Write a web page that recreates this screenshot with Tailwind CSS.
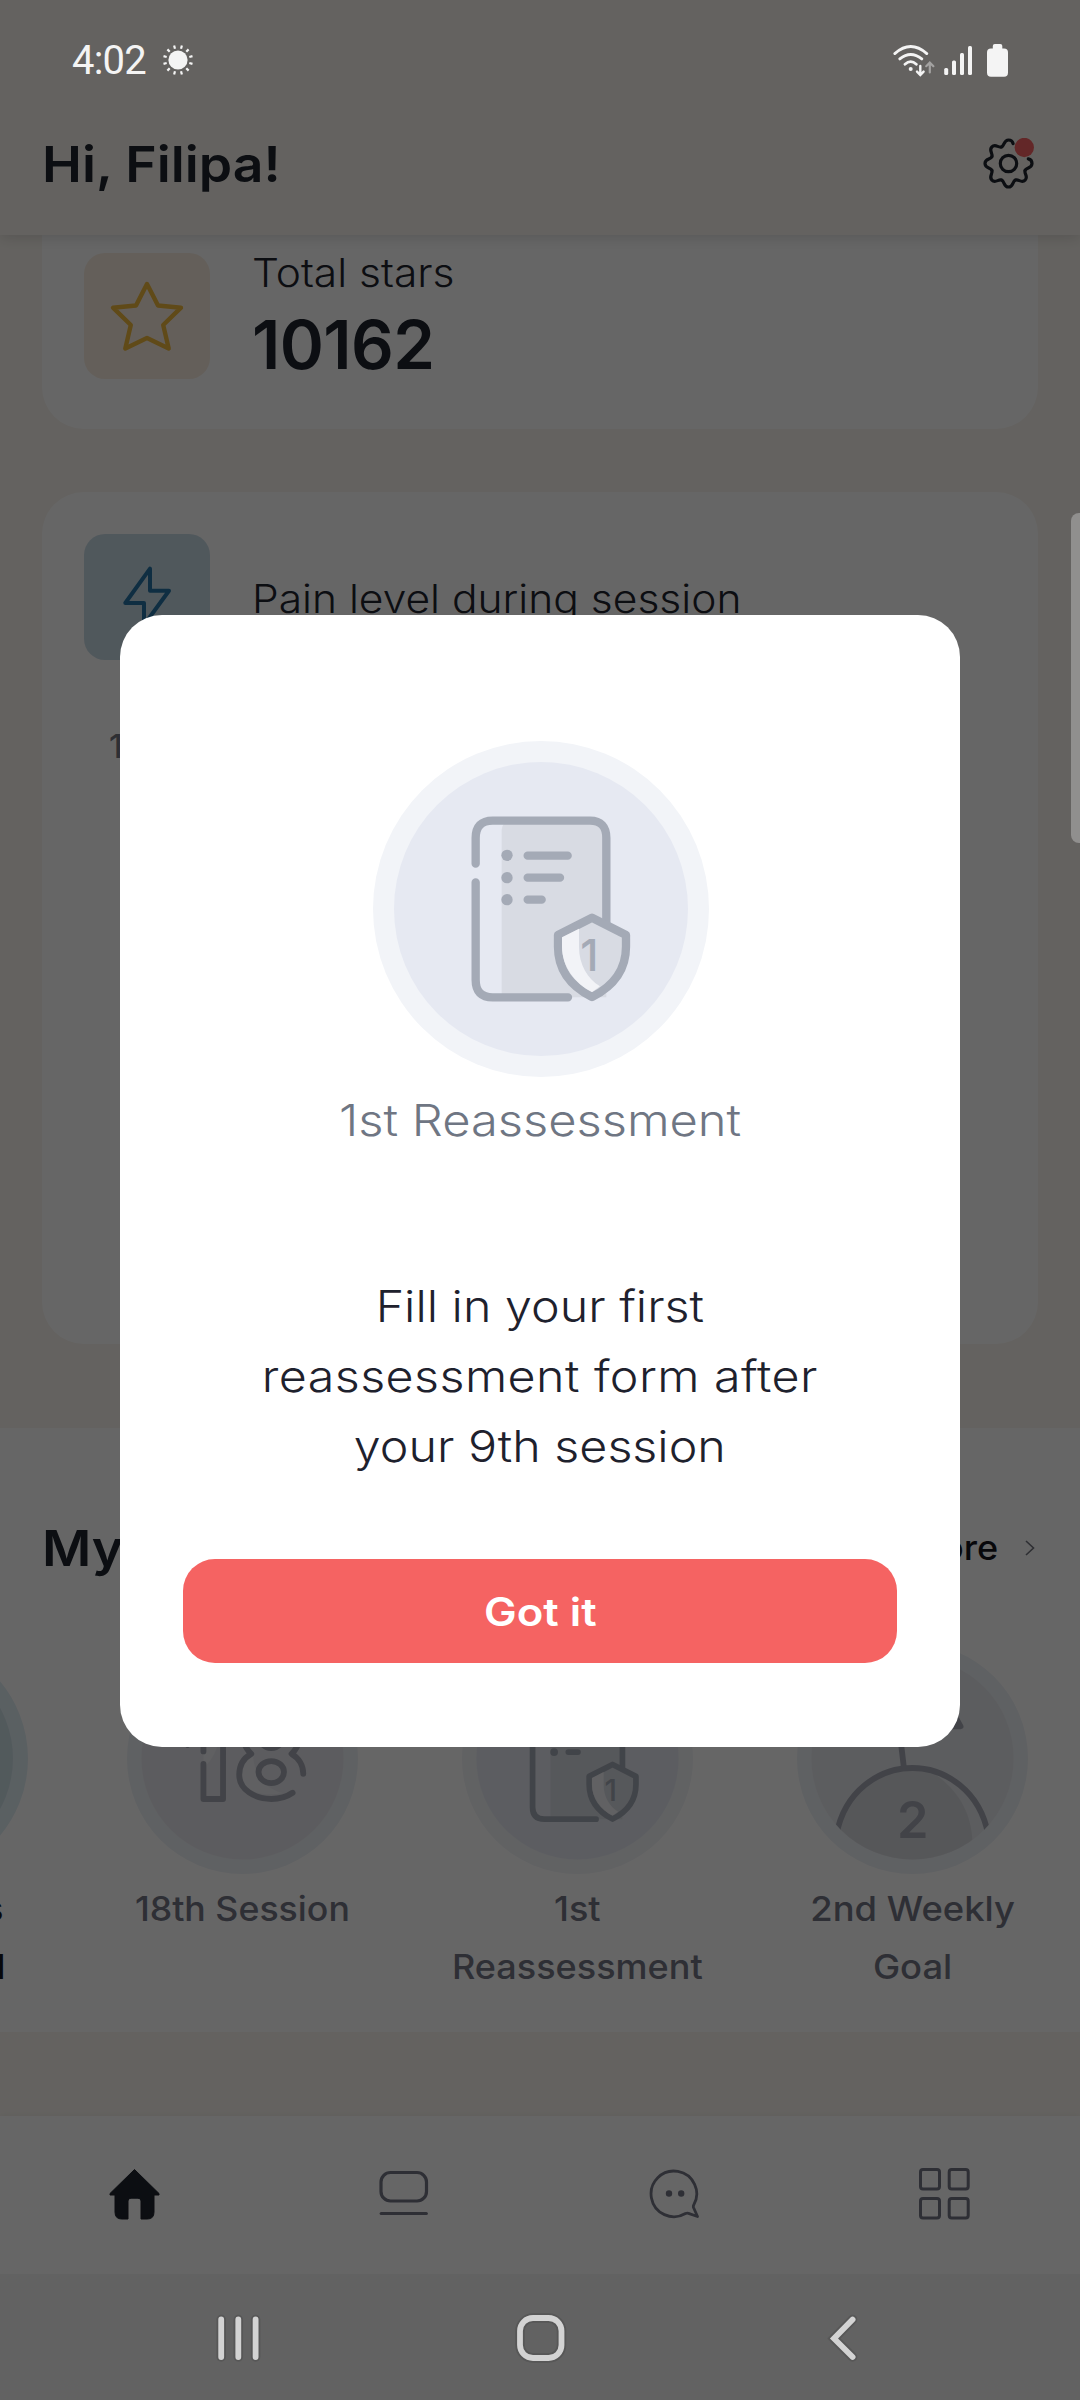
<!DOCTYPE html>
<html lang="en">
<head>
<meta charset="utf-8">
<title>Home</title>
<script src="https://cdn.jsdelivr.net/npm/@tailwindcss/browser@4"></script>
</head>
<body class="bg-[#faf6f0] font-[Inter,'Open_Sans',sans-serif]">
<svg class="hidden">
  <symbol id="reassessment" viewBox="69 63 1008 1008">
    <circle cx="573" cy="567" r="504" fill="#f2f4f8"/>
    <circle cx="573" cy="567" r="441" fill="#e6e9f2"/>
    <path d="M455 330Q457 302 485 302H722Q769 305 769 354V832H455Z" fill="#d8dbe3"/>
    <g fill="none" stroke="#a4aab6" stroke-width="25" stroke-linecap="round" stroke-linejoin="round">
      <path d="M377 431V354Q377 302 428 302H720Q769 302 769 354V610M377 487V780Q377 832 428 832H654"/>
      <path d="M533 407H653M533 473H630M533 539H575"/>
      <path d="M726 593L828 645V680C828 755 783 802 726 831C669 802 624 755 624 680V645Z" fill="#d8dbe3"/>
    </g>
    <path d="M636 652L687 626V680C687 735 713 775 750 799L726 816C676 790 636 740 636 680Z" fill="#f2f3f7"/>
    <g fill="#a4aab6"><circle cx="471" cy="406" r="17"/><circle cx="471" cy="473" r="17"/><circle cx="471" cy="539" r="17"/>
    <text x="718" y="753" font-size="132" font-weight="500" text-anchor="middle" font-family="Inter">1</text></g>
  </symbol>
</svg>

<div class="relative flex h-[2400px] w-[1080px] flex-col overflow-hidden">
  <header class="z-10 flex h-[235px] shrink-0 items-center justify-between bg-[#faf6f0] pt-[92px] pr-[46px] pl-[42px] shadow-[0_2px_14px_rgba(0,0,0,0.15)]">
    <h1 class="origin-left scale-x-[1.07] text-[50px] leading-[60px] font-semibold text-[#1e232d]">Hi, Filipa!</h1>
    <svg class="h-[52px] w-[52px]" viewBox="-26.500 -25.500 52 52" fill="none" stroke="#1e232d" stroke-width="3.2" stroke-linecap="round">
      <circle r="8.2"/>
      <path id="tooth" d="M-6.9-16.6C-3.7-17.9-5-23.5 0-23.5S3.7-17.9 6.9-16.6" transform="rotate(135)"/>
      <use href="#tooth" transform="rotate(45)"/>
      <use href="#tooth" transform="rotate(90)"/>
      <use href="#tooth" transform="rotate(135)"/>
      <use href="#tooth" transform="rotate(180)"/>
      <path d="M-6.9-16.6C-3.7-17.9-5-23.5 0-23.5C3-23.5 4.2-21.6 4.6-19.8"/>
      <path d="M19.8-4.6C21.6-4.2 23.5-3 23.5 0C23.5 5 17.9 3.7 16.6 6.9"/>
      <circle cx="15.8" cy="-16" r="9.7" fill="#f76364" stroke="none"/>
    </svg>
  </header>

  <main class="flex h-[1881px] shrink-0 flex-col overflow-hidden">
    <section class="mx-[42px] flex h-[194px] shrink-0 gap-[42px] rounded-b-[42px] bg-white px-[42px] pt-[18px]">
      <div class="h-[126px] w-[126px] rounded-[21px] bg-[#faeee1]">
        <svg viewBox="0 0 126 126" fill="none" stroke="#f0b83c" stroke-width="4.4" stroke-linejoin="round"><path d="M63 31L74 52.500L97 54.700L79.200 72L84.700 95.500L63 85L41.300 95.500L46.800 72L29 54.700L52 52.500Z"/></svg>
      </div>
      <div class="-mt-1 text-[#1e232d]">
        <p class="w-fit origin-left scale-x-[1.09] text-[39px] leading-[48px] font-[330]">Total stars</p>
        <p class="mt-2 text-[67px] leading-[80px] font-semibold tracking-[-0.6px]">10162</p>
      </div>
    </section>

    <section class="mx-[42px] mt-[63px] h-[852px] shrink-0 rounded-[42px] bg-white p-[42px]">
      <div class="flex items-center gap-[42px]">
        <div class="h-[126px] w-[126px] rounded-[21px] bg-[#c9dce7]">
          <svg viewBox="0 0 126 126" fill="none" stroke="#2674a5" stroke-width="4" stroke-linejoin="round"><path d="M66 34.700V56.700H85L60 91V69H41.300Z"/></svg>
        </div>
        <p class="origin-left scale-x-[1.09] pt-[3px] text-[39px] leading-[48px] font-[330] text-[#1e232d]">Pain level during session</p>
      </div>
      <p class="mt-[66px] ml-[25px] text-[33px] leading-[40px] font-medium text-[#73757f]">10</p>
    </section>

    <section class="mt-[84px] h-[604px] shrink-0 bg-white pt-[90px]">
      <div class="flex items-center justify-between pr-[45px] pl-[42px] leading-[60px]">
        <h2 class="origin-left scale-x-[1.07] text-[50px] font-semibold text-[#1e232d]">My achievements</h2>
        <div class="flex items-center gap-[27px] text-[34px] font-[450] text-[#14161c]"><span class="origin-right scale-x-[1.06]">See more</span>
          <svg class="h-4 w-[10px]" viewBox="0 0 10 16" fill="none" stroke="#73757f" stroke-width="1.6"><path d="M1 1L8.500 8L1 15"/></svg>
        </div>
      </div>
      <div class="mt-[60px] -ml-[260px] flex text-center text-[34px] leading-[58px] font-[450] text-[#737585]">
        <div class="flex w-[335px] shrink-0 flex-col items-center text-[#14161c]">
          <div class="mb-px h-[241px] w-[241px] rounded-full border-[15px] border-[#e2eff6] bg-[#cee0e7]"></div>
          <p>10 Sessions<br><span class="tracking-[-0.8px]">Weekly Goal</span></p>
        </div>
        <div class="flex w-[335px] shrink-0 flex-col items-center">
          <div class="mb-px flex h-[241px] items-center">
            <svg class="h-[231px] w-[231px]" viewBox="369 474 671 671" fill="none" stroke="#a5a8b4" stroke-width="17" stroke-linecap="round" stroke-linejoin="round">
              <circle cx="704.500" cy="809.500" r="335.500" fill="#eef2f7" stroke="none"/>
              <circle cx="704.500" cy="809.500" r="293.500" fill="#e7e7ed" stroke="none"/>
              <path d="M599 830Q625 800 632 770V680H591V830ZM735 800C737 850 765 895 820 910C765 922 700 905 700 857C700 830 712 812 735 800Z" fill="#eff0f5" stroke="none"/>
              <path d="M591 789V715L545 770L520 730L591 650H648V927H591V825"/>
              <path d="M850 909C833 921 812 927 788 927C740 927 695 900 695 857C695 830 708 808 730 796C680 750 710 660 788 660S896 750 847 796C868 808 881 830 881 854"/>
              <ellipse cx="788" cy="849" rx="37" ry="32"/><ellipse cx="788" cy="745" rx="35" ry="34"/>
            </svg>
          </div>
          <p class="scale-x-[1.05]">18th Session</p>
        </div>
        <div class="flex w-[335px] shrink-0 flex-col items-center">
          <div class="mb-px flex h-[241px] items-center"><svg class="h-[231px] w-[231px]"><use href="#reassessment"/></svg></div>
          <p class="scale-x-[1.06]">1st<br>Reassessment</p>
        </div>
        <div class="flex w-[335px] shrink-0 flex-col items-center">
          <div class="mb-px flex h-[241px] items-center">
            <svg class="h-[231px] w-[231px]" viewBox="747 474 671 671" fill="none" stroke="#a5a8b4" stroke-width="17" stroke-linejoin="round">
              <clipPath id="disc"><circle cx="1082.500" cy="809.500" r="293.500"/></clipPath>
              <circle cx="1082.500" cy="809.500" r="335.500" fill="#eef2f7" stroke="none"/>
              <circle cx="1082.500" cy="809.500" r="293.500" fill="#e6e8ed" stroke="none"/>
              <g clip-path="url(#disc)">
                <path d="M862 1030C890 905 985 837 1082 837C1112 837 1140 842 1157 862C1215 905 1257 970 1257 1060V1110H862Z" fill="#d8dadf" stroke="none"/>
                <path d="M862 1030C885 905 985 837 1082 837S1279 905 1302 1030"/>
              </g>
              <path d="M1057 832L1032 620L1160 640L1210 675" stroke-linecap="round"/>
              <path d="M1222 716L1195 716L1212 698Z" fill="#a5a8b4"/>
              <text x="1083" y="1040" font-size="147" font-weight="600" text-anchor="middle" font-family="Inter" fill="#a5a8b4" stroke="none">2</text>
            </svg>
          </div>
          <p class="scale-x-[1.07]">2nd Weekly<br>Goal</p>
        </div>
      </div>
    </section>
  </main>

  <nav class="grid h-[158px] shrink-0 grid-cols-4 place-items-center bg-white pb-[2px] shadow-[0_-1px_6px_rgba(0,0,0,0.04)]">
    <svg class="h-[52px] w-[52px]" viewBox="-25.500 -26 52 52" fill="#1e232d" stroke="#1e232d" stroke-linejoin="round"><path d="M0-24.500L24.500-.5V1H19.500V18Q19.500 25 13 25H6.500V7Q6.500 4.200 3.500 4.200H-3.500Q-6.500 4.200-6.500 7V25H-13Q-19.500 25-19.500 18V1H-24.500V-.5Z"/></svg>
    <svg class="h-[52px] w-[52px]" viewBox="-26 -26 52 52" fill="none" stroke="#737585" stroke-width="3.200" stroke-linecap="round"><rect x="-24" y="-21.500" width="45.500" height="28.500" rx="9.500"/><path d="M-23.800 19.500H21.300"/></svg>
    <svg class="h-[52px] w-[52px]" viewBox="-26 -26 52 52" fill="none" stroke="#737585" stroke-width="2.800" stroke-linejoin="round"><path d="M18.500 11.500A22.800 22.800 0 1 0 10.500 19.500Q12 18.800 13.500 19.300L22.500 22.500L18.500 13.500Q18.200 12.500 18.500 11.500Z" fill="#fff"/><circle cx="-6" cy="-.5" r="3.200" fill="#737585" stroke="none"/><circle cx="6.200" cy="-.5" r="3.200" fill="#737585" stroke="none"/></svg>
    <svg class="h-[52px] w-[52px]" viewBox="-26 -26 52 52" fill="none" stroke="#737585" stroke-width="3"><rect x="-24.500" y="-24.500" width="19" height="19.500" rx="2.500"/><rect x="4.200" y="-24.500" width="19" height="19.500" rx="2.500"/><rect x="-24.500" y="4.500" width="19" height="19.500" rx="2.500"/><rect x="4.200" y="4.500" width="19" height="19.500" rx="2.500"/></svg>
  </nav>
  <div class="h-[126px] shrink-0 bg-[#f5f5f5]"></div>

  <!-- Dialog layer -->
  <div class="absolute inset-0 z-20 flex justify-center bg-black/60 pt-[615px]">
    <div class="flex h-[1132px] w-[840px] flex-col items-center rounded-[42px] bg-white pt-[126px]">
      <svg class="ml-[2px] h-[336px] w-[336px]"><use href="#reassessment"/></svg>
      <h3 class="mt-[13px] scale-x-[1.11] text-[44px] leading-[60px] font-[350] text-[#6f7683]">1st Reassessment</h3>
      <p class="mt-[121px] scale-x-[1.1] text-center text-[44px] leading-[70px] font-[350] text-[#1e212d]">Fill in your first<br><span class="tracking-[0.4px]">reassessment form after</span><br>your 9th session</p>
      <button class="mt-[78px] h-[104px] w-[714px] rounded-[32px] bg-[#f56362] pt-[2px] text-[39px] font-semibold text-white"><span class="inline-block scale-x-[1.12]">Got it</span></button>
    </div>
  </div>

  <!-- System bars -->
  <div class="absolute inset-x-0 top-0 z-30 flex h-[120px] items-center pr-[71px] pl-[72px]">
    <span class="pt-px text-[40px] tracking-[-0.8px] text-[#f4f4f4] font-[Roboto,sans-serif]">4:02</span>
    <svg class="ml-4 h-8 w-8" viewBox="-16 -16 32 32" fill="#f4f4f4">
      <circle r="9.600"/>
      <g stroke="#f4f4f4" stroke-width="2.200">
        <path id="rays" d="M0-11.700V-15M0 11.700V15M11.700 0H15M-11.700 0H-15" transform="rotate(15)"/>
        <use href="#rays" transform="rotate(30)"/><use href="#rays" transform="rotate(60)"/>
      </g>
    </svg>
    <svg class="ml-auto h-9 w-[44px]" viewBox="892 42 44 36" fill="none" stroke="#f4f4f4" stroke-width="2.800" stroke-linecap="round">
      <path d="M894.800 53.600Q910.700 39.500 926.800 53.600M899.800 58.900Q910.700 50 921.800 58.900M905 64.200Q910.700 59 916.300 64.200"/>
      <circle cx="910.700" cy="69" r="2" fill="#f4f4f4" stroke="none"/>
      <path d="M920.300 66V74.500M917 71.600L920.300 75L923.600 71.600" stroke-width="2.400"/>
      <path d="M929.800 72.500V63.500M926.200 66.200L929.800 62.600L933.400 66.200" stroke="#a3a2a1" stroke-width="2.200"/>
    </svg>
    <svg class="ml-[7px] h-9 w-[30px]" viewBox="943 42 30 36" fill="#f4f4f4"><rect x="944.200" y="68" width="4" height="7" rx="1.500"/><rect x="952" y="60.500" width="4" height="14.500" rx="1.500"/><rect x="960" y="53" width="4" height="22" rx="1.500"/><rect x="968" y="46" width="4" height="29" rx="1.500"/></svg>
    <svg class="ml-[13px] h-9 w-[23px]" viewBox="986 42 23 36" fill="#f4f4f4"><rect x="987" y="48.500" width="21" height="28.300" rx="4"/><rect x="992.800" y="44" width="9.500" height="10" rx="2"/></svg>
  </div>
  <div class="absolute top-[513px] right-0 z-30 h-[330px] w-[9px] rounded-l-lg bg-[#908f8e]"></div>
  <div class="absolute inset-x-0 bottom-0 z-30 h-[126px]">
    <svg class="h-full w-full" viewBox="0 2274 1080 126" fill="none" stroke-linecap="round" stroke-linejoin="miter">
      <g stroke="#575757" stroke-width="9.500"><path d="M221.200 2319.500V2357M238.300 2319.500V2357M255.600 2319.500V2357"/><rect x="520" y="2318" width="41.500" height="40" rx="13"/><path d="M852.600 2319.500L834 2338.500L852.600 2357"/></g>
      <g stroke="#d3d3d3" stroke-width="5.800"><path d="M221.200 2319.500V2357M238.300 2319.500V2357M255.600 2319.500V2357"/><rect x="520" y="2318" width="41.500" height="40" rx="13"/><path d="M852.600 2319.500L834 2338.500L852.600 2357"/></g>
    </svg>
  </div>
</div>
</body>
</html>
